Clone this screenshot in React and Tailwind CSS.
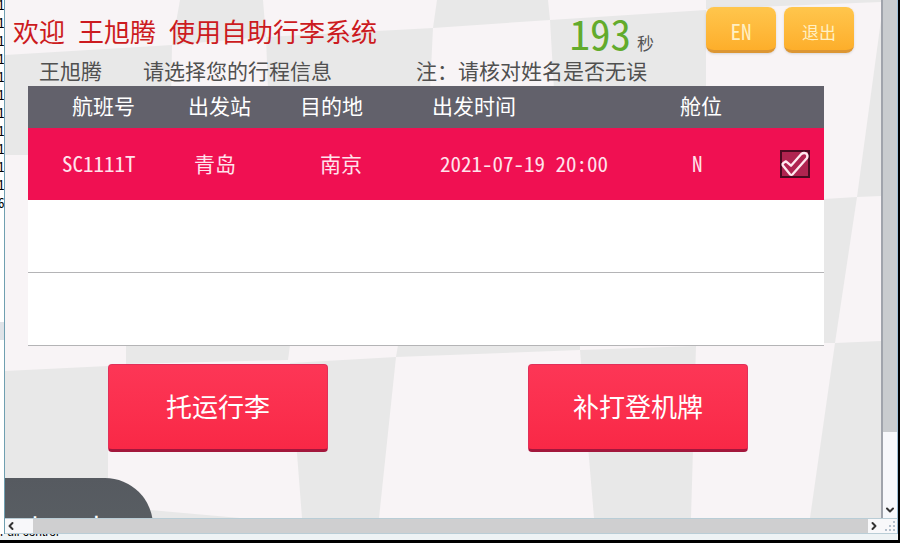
import React, { useState } from 'react';
import { ChevronLeft, ChevronRight, ChevronDown } from 'lucide-react';

const flights = [
    { no: 'SC1111T', from: '青岛', to: '南京', time: '2021-07-19 20:00', cabin: 'N' },
];

const logLines = ['1', '1', '1', '1', '1', '1', '1', '1', '1', '1', '1', '6'];

// Checkered floor behind the kiosk page
const Backdrop = () => (
    <svg
        className="absolute inset-0 w-full h-full"
        viewBox="5 0 876 518"
        preserveAspectRatio="none"
        aria-hidden="true"
    >
        <g fill="#e8e8e8">
            <path d="M180 0H263L266 37L172 45Z" />
            <path d="M5 55L172 45L170 155H5Z" />
            <path d="M266 37L433 28L430 90H268Z" />
            <path d="M437 0H548L550 20L433 28Z" />
            <path d="M550 20L706 10V90H554Z" />
            <path d="M706 0H881V2L706 9Z" />
            <path d="M881 20V196L857 197Z" />
            <path d="M824 199L857 197L835 343H824Z" />
            <path d="M835 343L881 341V518H810Z" />
            <path d="M5 371L108 366V480H5Z" />
            <path d="M126 345H290L288 360L126 364Z" />
            <path d="M290 363L396 357L379 518H302Z" />
            <path d="M398 345H580V350L396 357Z" />
            <path d="M580 350L696 346L691 518H594Z" />
            <path d="M150 510L240 518H150Z" />
        </g>
    </svg>
);

const TopButton = ({ children }) => (
    <button
        type="button"
        className="w-[70px] h-[46px] pt-1.5 rounded-lg bg-gradient-to-b from-[#ffc64c] to-[#fdae2a] border-b-3 border-[#dc9634] shadow-sm text-[#fff0c4]"
    >
        {children}
    </button>
);

const ActionButton = ({ children }) => (
    <button
        type="button"
        className="w-[220px] h-[88px] pb-0.5 rounded-sm bg-gradient-to-b from-[#fd3656] to-[#f92846] border border-b-3 border-[#e0305a] border-b-[#a3173c] text-[26px] text-white"
    >
        {children}
    </button>
);

const SelectBox = ({ label, checked, onChange }) => (
    <label className="relative block w-[30px] h-[28px]">
        <input
            type="checkbox"
            aria-label={label}
            checked={checked}
            onChange={onChange}
            className="peer block appearance-none w-full h-full border-2 border-[#4a0a20] bg-[#b02450]"
        />
        <svg
            className="absolute inset-0 w-full h-full hidden peer-checked:block pointer-events-none"
            viewBox="0 0 90 84"
            fill="none"
            stroke="#ffe9ef"
            strokeWidth="7"
            strokeLinejoin="round"
        >
            <path d="M8 46Q6 42 10 39L18 34L33 47L64 12Q70 7 78 10Q85 16 81 24L38 73Q34 76 30 73Z" />
        </svg>
    </label>
);

const FlightTable = () => {
    const [selected, setSelected] = useState('SC1111T');

    return (
        <table className="w-full table-fixed border-collapse text-left text-[21px] leading-6 text-white">
            <colgroup>
                <col className="w-[144px]" />
                <col className="w-[116px]" />
                <col className="w-[112px]" />
                <col />
                <col className="w-[120px]" />
                <col className="w-[64px]" />
            </colgroup>
            <thead>
                <tr className="h-[42px] bg-[#62616b]">
                    <th className="p-0 pb-1 pl-11 font-normal">航班号</th>
                    <th className="p-0 pb-1 pl-4 font-normal">出发站</th>
                    <th className="p-0 pb-1 pl-3 font-normal">目的地</th>
                    <th className="p-0 pb-1 pl-8 font-normal">出发时间</th>
                    <th className="p-0 pb-1 pl-10 font-normal">舱位</th>
                    <td className="p-0"></td>
                </tr>
            </thead>
            <tbody>
                {flights.map((flight) => (
                    <tr key={flight.no} className="h-[72px] bg-[#f01052] text-[#ffe3ec]">
                        <td className="p-0 pb-0.5 pl-[34px]">{flight.no}</td>
                        <td className="p-0 pb-0.5 pl-[22px]">{flight.from}</td>
                        <td className="p-0 pb-0.5 pl-8">{flight.to}</td>
                        <td className="p-0 pb-0.5 pl-10">{flight.time}</td>
                        <td className="p-0 pb-0.5 pl-[52px]">{flight.cabin}</td>
                        <td className="p-0 pl-5">
                            <SelectBox
                                label={flight.no}
                                checked={selected === flight.no}
                                onChange={() => setSelected(selected === flight.no ? '' : flight.no)}
                            />
                        </td>
                    </tr>
                ))}
                <tr className="h-[72px] bg-white border-b border-[#b4b4b6]">
                    <td colSpan={6}></td>
                </tr>
                <tr className="h-[73px] bg-white border-b border-[#b4b4b6]">
                    <td colSpan={6}></td>
                </tr>
            </tbody>
        </table>
    );
};

const KioskPage = () => (
    <main className="relative flex-1 min-w-0 flex flex-col overflow-hidden bg-[#f8f4f6]">
        <Backdrop />
        <div className="relative flex-1 min-h-0 flex flex-col">
            <header className="h-[58px] shrink-0 flex pl-2 pr-[27px]">
                <h1 className="flex gap-[13px] pt-[15px] text-[26px] leading-8 text-[#cc1a20] whitespace-nowrap">
                    <span>欢迎</span>
                    <span>王旭腾</span>
                    <span>使用自助行李系统</span>
                </h1>
                <div className="ml-auto flex items-baseline gap-1.5 pt-3 pr-[52px]">
                    <span className="text-[41px] leading-10 text-[#62ab2c]">193</span>
                    <span className="text-[17px] leading-5 text-[#555]">秒</span>
                </div>
                <div className="flex gap-2 pt-[7px]">
                    <TopButton><span className="text-[21px]">EN</span></TopButton>
                    <TopButton><span className="text-[17px]">退出</span></TopButton>
                </div>
            </header>

            <div className="h-[28px] shrink-0 flex items-start pl-[34px] text-[21px] leading-6 text-[#505050] whitespace-nowrap">
                <p>王旭腾</p>
                <p className="pl-[41px]">请选择您的行程信息</p>
                <p className="pl-[84px]">注：请核对姓名是否无误</p>
            </div>

            <div className="pl-[23px] pr-[57px]">
                <FlightTable />
            </div>

            <div className="flex justify-between pt-[18px] pl-[103px] pr-[133px]">
                <ActionButton>托运行李</ActionButton>
                <ActionButton>补打登机牌</ActionButton>
            </div>

            <div className="flex-1 min-h-0 overflow-hidden pt-[26px]">
                <button
                    type="button"
                    className="block w-[148px] h-24 pl-4 pt-1 rounded-r-[48px] bg-gradient-to-b from-[#565a60] to-[#5b6266] text-left text-3xl text-white"
                >
                    上一步
                </button>
            </div>
        </div>
    </main>
);

const App = () => (
    <div
        lang="zh-CN"
        className="h-screen flex flex-col overflow-hidden bg-black pr-0.5 pb-[3px] font-['Noto_Sans_Mono_CJK_SC','Noto_Sans_CJK_SC',sans-serif]"
    >
        <div className="flex-1 min-h-0 flex bg-white border-r border-[#9fc0d8]">
            {/* Slice of the log window that sits behind */}
            <aside className="w-[5px] shrink-0 overflow-hidden border-r border-[#6f9fb0] bg-white text-[13px] leading-[18px] text-black">
                <div className="-mt-1 -ml-0.5">
                    {logLines.map((line, index) => (
                        <div key={index}>{line}</div>
                    ))}
                </div>
                <div className="mt-[110px] h-[18px] bg-[#dfe3e8]"></div>
            </aside>

            <div className="flex-1 min-w-0 flex flex-col">
                <div className="flex-1 min-h-0 flex">
                    <KioskPage />
                    {/* Vertical scrollbar */}
                    <div className="w-4 shrink-0 flex flex-col border-l-2 border-[#a0a4ac] bg-[#f7f8fb]">
                        <div className="h-5/6 bg-[#c9cccf]"></div>
                        <div className="flex-1 flex items-end justify-center pb-0.5">
                            <ChevronDown className="w-3 h-3 text-[#333]" strokeWidth={4} />
                        </div>
                    </div>
                </div>

                {/* Horizontal scrollbar */}
                <div className="h-[16px] shrink-0 flex items-center border-y border-[#b9cdd6] bg-[#f8f8fa]">
                    <div className="w-7 shrink-0">
                        <ChevronLeft className="w-3 h-3 text-[#333]" strokeWidth={4} />
                    </div>
                    <div className="flex-1 h-full bg-[#cfcfd0]"></div>
                    <div className="w-[29px] shrink-0 flex items-center justify-between">
                        <ChevronRight className="w-3 h-3 text-[#333]" strokeWidth={4} />
                        <svg className="w-3 h-3" viewBox="0 0 12 12" fill="#b4c0cc" aria-hidden="true">
                            <path d="M8 1h2v2H8zM8 5h2v2H8zM8 9h2v2H8zM4 5h2v2H4zM4 9h2v2H4zM0 9h2v2H0z" />
                        </svg>
                    </div>
                </div>
            </div>
        </div>

        {/* Bottom edge of the window behind */}
        <div className="h-[6px] shrink-0 flex items-end overflow-hidden bg-[#eef3f5] pb-0.5 font-['Liberation_Sans',sans-serif] text-[12px] leading-3 text-black">
            <span>Full control</span>
        </div>
    </div>
);

export default App;
